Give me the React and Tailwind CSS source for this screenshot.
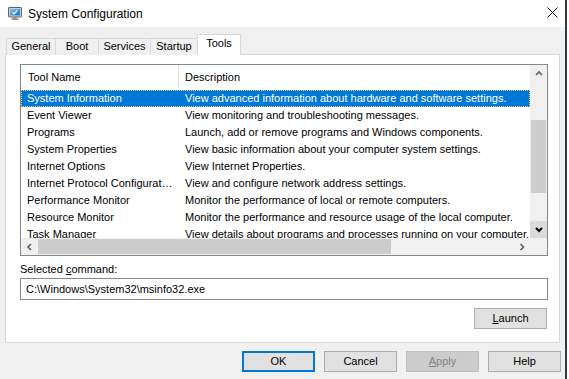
import React from "react";

const tools = [
  ["System Information", "View advanced information about hardware and software settings."],
  ["Event Viewer", "View monitoring and troubleshooting messages."],
  ["Programs", "Launch, add or remove programs and Windows components."],
  ["System Properties", "View basic information about your computer system settings."],
  ["Internet Options", "View Internet Properties."],
  ["Internet Protocol Configuration", "View and configure network address settings."],
  ["Performance Monitor", "Monitor the performance of local or remote computers."],
  ["Resource Monitor", "Monitor the performance and resource usage of the local computer."],
  ["Task Manager", "View details about programs and processes running on your computer."],
];

const tabs = [
  { label: "General", w: "w-[49px]" },
  { label: "Boot", w: "w-[43px]" },
  { label: "Services", w: "w-[52px]" },
  { label: "Startup", w: "w-[47px]" },
];

function AppIcon() {
  return (
    <svg width="14" height="13" viewBox="0 0 14 13">
      <defs>
        <linearGradient id="scr" x1="0" y1="0" x2="1" y2="1">
          <stop offset="0" stopColor="#7fc4f5" />
          <stop offset="1" stopColor="#1c6fc9" />
        </linearGradient>
      </defs>
      <rect x="0.5" y="0.5" width="13" height="9.5" rx="0.5" fill="#c9ced6" stroke="#5d6670" />
      <rect x="2" y="2" width="10" height="6.5" fill="url(#scr)" />
      <path d="M4.5 5.5 L6 7 L9.5 3" stroke="#ffffff" strokeWidth="1.1" fill="none" />
      <rect x="5.5" y="10" width="3" height="1.5" fill="#7d8590" />
      <rect x="3.5" y="11.5" width="7" height="1.2" fill="#5d6670" />
    </svg>
  );
}

function Chevron({ dir, color = "#606060", bold = false }) {
  const paths = {
    up: "M1 5 L4 2 L7 5",
    down: "M1 2 L4 5 L7 2",
    left: "M5 1 L2 4 L5 7",
    right: "M2.5 1 L5.5 4 L2.5 7",
  };
  return (
    <svg width="8" height="8" viewBox="0 0 8 8">
      <path d={paths[dir]} stroke={color} strokeWidth={bold ? 2 : 1.6} fill="none" />
    </svg>
  );
}

const buttonStyles = {
  normal: "bg-[#e1e1e1] border border-[#adadad] text-black",
  default: "bg-[#e1e1e1] border-2 border-[#0078d7] text-black",
  disabled: "bg-[#cccccc] border border-[#bfbfbf] text-[#838383]",
};

function WinButton({ children, variant = "normal" }) {
  return (
    <div className={`w-[73px] h-[21px] flex items-center justify-center ${buttonStyles[variant]}`}>
      {children}
    </div>
  );
}

export default function App() {
  return (
    <div className="w-[569px] h-[379px] bg-white overflow-hidden font-['Liberation_Sans',Arial,sans-serif] text-[11px] text-black flex">
      <div className="w-[567px] h-full bg-[#f0f0f0] border-r-2 border-[#2b3a4f] flex flex-col">
        {/* title bar */}
        <div className="h-[27px] bg-white flex items-center shrink-0">
          <div className="ml-[8px] mt-[-1px]">
            <AppIcon />
          </div>
          <span className="ml-[6px] text-[12px] leading-none">System Configuration</span>
          <div className="ml-auto mr-[7px] mt-[-2px]">
            <svg width="11" height="11" viewBox="0 0 11 11">
              <path d="M0.5 0.5 L10.5 10.5 M10.5 0.5 L0.5 10.5" stroke="#111" strokeWidth="1" />
            </svg>
          </div>
        </div>

        {/* tabs */}
        <div className="mt-[7px] ml-[6px] h-[21px] flex items-end -mb-px relative z-10">
          {tabs.map((t) => (
            <div
              key={t.label}
              className={`${t.w} h-[17px] border-t border-l border-[#d9d9d9] bg-[#f0f0f0] flex items-center justify-center leading-none pb-px`}
            >
              {t.label}
            </div>
          ))}
          <div className="w-[44px] h-[21px] border-t border-l border-r border-[#d9d9d9] bg-white flex items-center justify-center leading-none pb-[3px]">
            Tools
          </div>
        </div>

        {/* tab panel */}
        <div className="ml-[5px] w-[555px] h-[289px] bg-white border border-[#d9d9d9] pl-[14px] pt-[9px] flex flex-col">
          {/* list box */}
          <div className="w-[528px] h-[192px] border border-[#828790] flex flex-col">
            <div className="flex flex-1 min-h-0">
              <div className="flex-1 overflow-hidden">
                <div className="h-[25px] flex items-center">
                  <div className="w-[158px] h-full pl-[7px] flex items-center border-r border-[#e5e5e5]">
                    Tool Name
                  </div>
                  <div className="pl-[6px]">Description</div>
                </div>
                {tools.map(([name, desc], i) => (
                  <div
                    key={name}
                    className={`h-[17px] flex items-center whitespace-nowrap ${
                      i === 0
                        ? "bg-[#0078d7] text-white border border-dotted border-[#f3c98b]"
                        : "border border-transparent"
                    }`}
                  >
                    <div className="w-[158px] pl-[5px] pr-[6px] overflow-hidden text-ellipsis">{name}</div>
                    <div className="pl-[5px]">{desc}</div>
                  </div>
                ))}
              </div>
              {/* vertical scrollbar */}
              <div className="w-[17px] bg-[#f0f0f0] flex flex-col">
                <div className="h-[17px] flex items-center justify-center">
                  <Chevron dir="up" />
                </div>
                <div className="flex-1 flex flex-col">
                  <div className="h-[38px]" />
                  <div className="h-[73px] mx-px bg-[#cdcdcd]" />
                </div>
                <div className="h-[17px] bg-[#dadada] flex items-center justify-center">
                  <Chevron dir="down" color="#000" bold />
                </div>
              </div>
            </div>
            {/* horizontal scrollbar */}
            <div className="h-[17px] flex shrink-0">
              <div className="flex-1 bg-[#f0f0f0] flex items-center">
                <div className="w-[17px] flex items-center justify-center">
                  <Chevron dir="left" />
                </div>
                <div className="w-[353px] h-[15px] bg-[#cdcdcd]" />
                <div className="ml-auto w-[17px] flex items-center justify-center">
                  <Chevron dir="right" />
                </div>
              </div>
              <div className="w-[17px] bg-[#f0f0f0]" />
            </div>
          </div>

          <div className="mt-[6px] leading-[14px]">
            Selected <span className="underline">c</span>ommand:
          </div>
          <div className="mt-[2px] w-[528px] h-[22px] border border-[#8a8a8a] flex items-center pl-[5px]">
            C:\Windows\System32\msinfo32.exe
          </div>
          <div className="mt-[8px] w-[528px] flex justify-end pr-px">
            <WinButton>
              <span>
                <span className="underline">L</span>aunch
              </span>
            </WinButton>
          </div>
        </div>

        {/* dialog buttons */}
        <div className="mt-[8px] flex justify-end gap-[9px] pr-[4px]">
          <WinButton variant="default">OK</WinButton>
          <WinButton>Cancel</WinButton>
          <WinButton variant="disabled">
            <span>
              <span className="underline">A</span>pply
            </span>
          </WinButton>
          <WinButton>Help</WinButton>
        </div>
      </div>
    </div>
  );
}
